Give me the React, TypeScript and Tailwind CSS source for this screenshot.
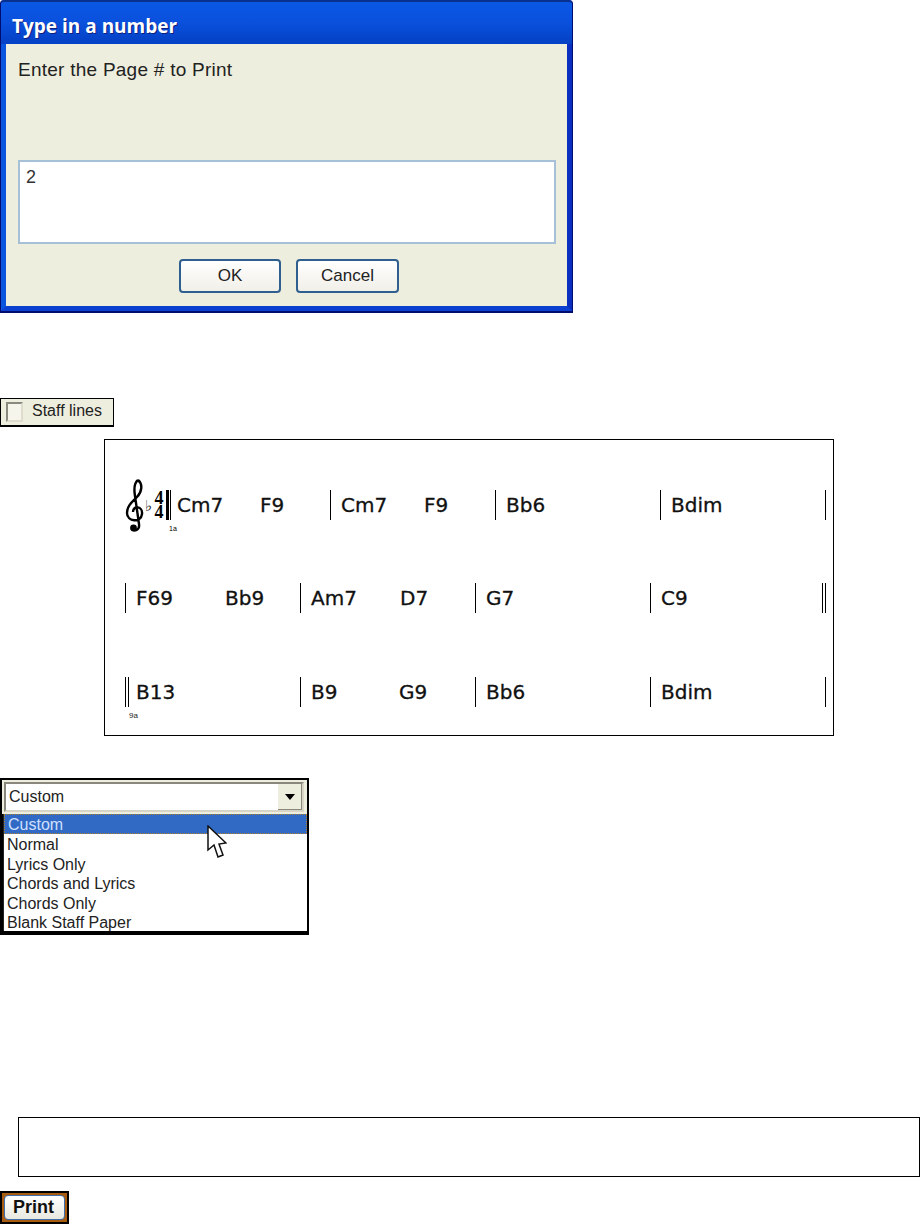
import React from "react";

function Chord({ text, width }: { text: string; width: number }) {
	return (
		<span className="block text-[20px] leading-[28px] text-[#111] font-['DejaVu_Sans',sans-serif] [-webkit-text-stroke:0.3px_#111]" style={{ width }}>
			{text}
		</span>
	);
}

function Bar({ width, chords, double }: { width: number; chords: { text: string; w: number }[]; double?: boolean }) {
	return (
		<div className="flex h-[30px] shrink-0" style={{ width }}>
			<div className={double ? "w-[4px] shrink-0 h-full border-x border-black" : "w-[1px] shrink-0 h-full bg-black"} />
			{chords.length > 0 && (
				<div className={double ? "flex pl-[7px] pt-px" : "flex pl-[10px] pt-px"}>
					{chords.map((c) => (
						<Chord key={c.text} text={c.text} width={c.w} />
					))}
				</div>
			)}
		</div>
	);
}

function Clef() {
	return (
		<svg width="20" height="56" viewBox="0 0 20 56" className="shrink-0 -mt-[12px]">
			<path
				d="M13 2 C18 6 17 14 12 19 C7 24 2 28 2 35 C2 44 16 45 17 36 C18 28 8 27 8 34 M13 2 C9 5 9 12 10 18 L14 46 C15 53 8 54 7 50"
				fill="none"
				stroke="#000"
				strokeWidth="2.4"
			/>
			<circle cx="8.5" cy="50" r="3.4" fill="#000" />
		</svg>
	);
}

function XpButton({ label, width }: { label: string; width: number }) {
	return (
		<div
			className="h-[34px] rounded-[4px] border-2 border-[#2f5f8f] bg-gradient-to-b from-white to-[#f0efe8] flex items-center justify-center text-[17px] text-[#222] font-['Liberation_Sans',sans-serif]"
			style={{ width }}
		>
			{label}
		</div>
	);
}

const options = ["Custom", "Normal", "Lyrics Only", "Chords and Lyrics", "Chords Only", "Blank Staff Paper"];

export default function App() {
	return (
		<div className="w-[920px] h-[1224px] bg-white overflow-hidden flex flex-col font-['Liberation_Sans',sans-serif]">
			{/* dialog */}
			<div className="w-[573px] h-[313px] flex flex-col shrink-0 bg-[#0a2fb8] rounded-t-[4px] border-x border-b-2 border-[#000c6e]">
				<div className="h-[44px] shrink-0 flex items-center pl-[11px] pt-[6px] bg-gradient-to-b from-[#0a58e6] via-[#0a50dc] to-[#0440c4] rounded-t-[4px] border-t-2 border-[#07308f]">
					<span className="text-white font-bold text-[19px] font-['Open_Sans',sans-serif] [text-shadow:1px_1px_#0f1f80]">Type in a number</span>
				</div>
				<div className="flex-1 flex flex-col bg-[#eeeedf] border-l-[5px] border-l-[#0a55e0] border-r-[5px] border-r-[#0a2fc0] border-b-[5px] border-b-[#0a3fd0] pl-[12px] pr-[11px]">
					<p className="mt-[15px] h-[101px] text-[19px] leading-[22px] text-[#222] tracking-[0.25px]">Enter the Page # to Print</p>
					<div className="w-[538px] h-[84px] border-2 border-[#a6c0d8] bg-white pl-[6px] pt-[4px] text-[18px] leading-[22px] text-[#333]">2</div>
					<div className="flex gap-[15px] mt-[15px] pl-[161px]">
						<XpButton label="OK" width={102} />
						<XpButton label="Cancel" width={103} />
					</div>
				</div>
			</div>

			{/* staff lines */}
			<div className="mt-[85px] w-[114px] h-[29px] shrink-0 flex items-center bg-[#eeeedf] border border-b-2 border-black pl-[5px] gap-[9px]">
				<div className="w-[17px] h-[20px] bg-[#f6f5ec] border-2 border-t-[#8a8a80] border-l-[#8a8a80] border-r-[#dddccd] border-b-[#dddccd]" />
				<span className="text-[16px] leading-[20px] pb-[3px] text-[#222]">Staff lines</span>
			</div>

			{/* lead sheet */}
			<div className="mt-[12px] ml-[104px] w-[730px] h-[297px] shrink-0 border border-black pl-[20px] pt-[50px] flex flex-col">
				<div className="flex h-[30px]">
					<Clef />
					<span className="text-[15px] leading-[15px] text-[#222] mt-[8px] w-[8px]">♭</span>
					<div className="flex flex-col w-[12px] text-[18px] leading-[14px] font-bold font-['Liberation_Serif',serif] text-black text-center mt-px">
						<span>4</span>
						<span>4</span>
					</div>
					<div className="relative w-[5px] h-full ml-[1px] mr-[6px] border-l-[3px] border-r border-black">
						<span className="absolute left-[0px] top-[35px] text-[7px] leading-[7px] text-black">1a</span>
					</div>
					<div className="flex w-[153px] pt-px">
						<Chord text="Cm7" width={83} />
						<Chord text="F9" width={60} />
					</div>
					<Bar width={165} chords={[{ text: "Cm7", w: 83 }, { text: "F9", w: 60 }]} />
					<Bar width={165} chords={[{ text: "Bb6", w: 120 }]} />
					<Bar width={165} chords={[{ text: "Bdim", w: 120 }]} />
					<Bar width={1} chords={[]} />
				</div>

				<div className="flex h-[30px] mt-[63px]">
					<Bar width={175} chords={[{ text: "F69", w: 89 }, { text: "Bb9", w: 60 }]} />
					<Bar width={175} chords={[{ text: "Am7", w: 89 }, { text: "D7", w: 60 }]} />
					<Bar width={175} chords={[{ text: "G7", w: 120 }]} />
					<Bar width={172} chords={[{ text: "C9", w: 120 }]} />
					<Bar width={4} chords={[]} double />
				</div>

				<div className="flex h-[30px] mt-[64px]">
					<div className="relative">
						<span className="absolute left-[4px] top-[35px] text-[8px] leading-[8px] text-[#222]">9a</span>
						<Bar width={175} chords={[{ text: "B13", w: 120 }]} double />
					</div>
					<Bar width={175} chords={[{ text: "B9", w: 88 }, { text: "G9", w: 60 }]} />
					<Bar width={175} chords={[{ text: "Bb6", w: 120 }]} />
					<Bar width={175} chords={[{ text: "Bdim", w: 120 }]} />
					<Bar width={1} chords={[]} />
				</div>
			</div>

			{/* dropdown */}
			<div className="relative mt-[42px] w-[309px] h-[157px] shrink-0 bg-black p-[2px] text-[16px] text-[#222]">
				<div className="h-[34px] bg-[#eeeedf] p-[2px] pr-[3px]">
					<div className="h-full bg-white border-2 border-t-[#8a887c] border-l-[#8a887c] border-b-[#d8d5c6] border-r-[#d8d5c6] flex items-center justify-between pl-[3px]">
						<span>Custom</span>
						<div className="w-[24px] h-full bg-[#eeeedf] border-r border-b border-[#8a887c] flex items-center justify-center">
							<svg width="10" height="6" viewBox="0 0 10 6"><path d="M0 0H10L5 6Z" fill="#000" /></svg>
						</div>
					</div>
				</div>
				<div className="bg-white h-[117px] ml-[1px] border-l border-[#222] flex flex-col leading-[19.6px]">
					{options.map((o, i) => (
						<div key={o} className={i === 0 ? "h-[20px] pl-[3px] bg-[#316ac5] text-[#cfe0ff] border border-dotted border-[#b08030] leading-[19px]" : "h-[19.6px] pl-[3px] pt-[1px]"}>
							{o}
						</div>
					))}
				</div>
				<svg width="20" height="34" viewBox="0 0 20 34" className="absolute left-[207px] top-[47px]">
					<path d="M1 1 L1 25 L7 20 L11 32 L16 30 L12 19 L19 18 Z" fill="#fff" stroke="#111" strokeWidth="1.5" strokeLinejoin="miter" />
				</svg>
			</div>

			{/* empty box */}
			<div className="mt-[182px] ml-[18px] w-[902px] h-[60px] shrink-0 border border-black" />

			{/* print */}
			<div className="mt-[14px] w-[69px] h-[33px] shrink-0 bg-black p-[2px]">
				<div className="h-full bg-[#a85c10] p-[2px]">
					<div className="h-full rounded-[4px] border border-[#3f6fa8] bg-gradient-to-b from-white to-[#e8e8e0] flex items-center justify-center pr-[2px] text-[18px] font-bold text-[#111]">
						Print
					</div>
				</div>
			</div>
		</div>
	);
}
